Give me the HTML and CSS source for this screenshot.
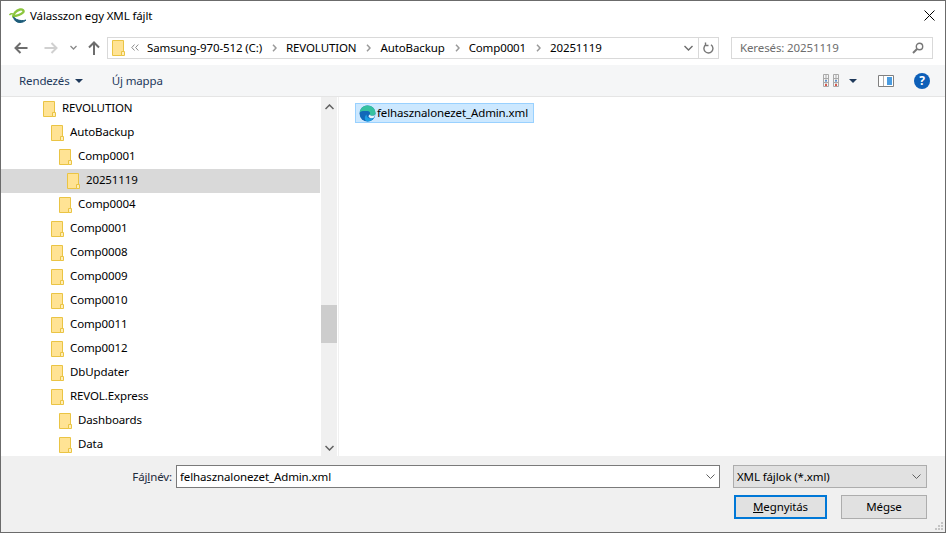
FILE: index.html
```html
<!DOCTYPE html>
<html lang="hu">
<head>
    <meta charset="UTF-8">
    <title>Válasszon egy XML fájlt</title>
    <link rel="stylesheet" href="styles.css">
</head>
<body>
<svg class="defs" width="0" height="0">
    <symbol id="folder" viewBox="0 0 13 16">
        <path d="M.5.500h11v15H.5z" fill="#ffe394" stroke="#eac444"/>
        <path d="M9.500 15.500v-4h3v4z" fill="#ffeeb8" stroke="#eac444"/>
    </symbol>
    <symbol id="crumb-sep" viewBox="0 0 5 8">
        <path d="M1 .8L4 4 1 7.200" fill="none" stroke="#9a9a9a" stroke-width="1.500"/>
    </symbol>
</svg>
<div class="dialog">
    <div class="titlebar">
        <svg class="app-logo" width="18" height="16" viewBox="0 0 18 16">
            <path d="M3 8.500C7 8 11.500 7 14 4.500 15.500 2.500 13.500 1 11 1.500 7 2.300 4 6 4.500 9" fill="none" stroke="#8cc63f" stroke-width="2.400"/>
            <path d="M.5 7C1.500 5.500 2.500 5.500 4 6" fill="none" stroke="#8cc63f" stroke-width="1.400"/>
            <path d="M4.500 9C5 12.500 7.500 14.500 11 14.500 13.500 14.500 15.500 13.500 17 12 14 13 8 13 4.500 9z" fill="#1d5c7a" stroke="#1d5c7a"/>
        </svg>
        <span class="title">Válasszon egy XML fájlt</span>
        <svg class="close" width="11" height="11" viewBox="0 0 11 11"><path d="M.5.500l10 10M10.500.500l-10 10" stroke="#000" stroke-width="1"/></svg>
    </div>

    <div class="navbar">
        <svg class="nav-icon" width="14" height="12" viewBox="0 0 14 12"><path d="M1 6h12.500M6.500 1L1.500 6l5 5" fill="none" stroke="#6d6d6d" stroke-width="2"/></svg>
        <svg class="nav-icon nav-fwd" width="14" height="12" viewBox="0 0 14 12"><path d="M13 6H.5M7.500 1l5 5-5 5" fill="none" stroke="#d0d0d0" stroke-width="2"/></svg>
        <svg class="nav-icon nav-down" width="7" height="5" viewBox="0 0 7 5"><path d="M.5 1l3 3 3-3" fill="none" stroke="#8a8a8a" stroke-width="1.300"/></svg>
        <svg class="nav-icon nav-up" width="12" height="14" viewBox="0 0 12 14"><path d="M6 14V1.500M1 6.500l5-5 5 5" fill="none" stroke="#6d6d6d" stroke-width="2"/></svg>
        <div class="address">
            <svg class="addr-folder" width="13" height="16"><use href="#folder"/></svg>
            <svg class="addr-more" width="8" height="7" viewBox="0 0 8 7"><path d="M3.500.500L.8 3.500l2.700 3M7.300.500L4.600 3.500l2.700 3" fill="none" stroke="#8a8a8a"/></svg>
            <span class="crumb crumb-first">Samsung-970-512 (C:)</span>
            <svg class="sep" width="5" height="8"><use href="#crumb-sep"/></svg><span class="crumb">REVOLUTION</span>
            <svg class="sep" width="5" height="8"><use href="#crumb-sep"/></svg><span class="crumb">AutoBackup</span>
            <svg class="sep" width="5" height="8"><use href="#crumb-sep"/></svg><span class="crumb">Comp0001</span>
            <svg class="sep" width="5" height="8"><use href="#crumb-sep"/></svg><span class="crumb">20251119</span>
            <svg class="addr-drop" width="9" height="6" viewBox="0 0 9 6"><path d="M.5 1l4 4 4-4" fill="none" stroke="#6d6d6d" stroke-width="1.400"/></svg>
            <div class="refresh">
                <svg width="11" height="12" viewBox="0 0 11 12"><path d="M3 2.700a4.500 4.500 0 1 0 5 .1M2.500 .5v3h3" fill="none" stroke="#777" stroke-width="1.400"/></svg>
            </div>
        </div>
        <div class="search">
            <span>Keresés: 20251119</span>
            <svg width="12" height="12" viewBox="0 0 12 12"><circle cx="7.500" cy="4.500" r="3.200" fill="none" stroke="#777" stroke-width="1.400"/><path d="M5 7L1 11" stroke="#777" stroke-width="2"/></svg>
        </div>
    </div>

    <div class="toolbar">
        <span class="tool tool-sort">Rendezés</span>
        <span class="caret"></span>
        <span class="tool tool-new">Új mappa</span>
        <svg class="view-icon" width="16" height="13" viewBox="0 0 16 13">
            <path d="M.5.500h5v12h-5zM10.500.500h5v12h-5zM.5 4.500h5M.5 8.500h5M10.500 4.500h5M10.500 8.500h5M3 .5v12M13 .5v12" fill="none" stroke="#a9a9a9"/>
            <path d="M2 10h2v2H2zM12 10h2v2h-2z" fill="#d65a4e"/>
            <path d="M2 6h2v1.500H2zM12 6h2v1.500h-2z" fill="#5a93d6"/>
        </svg>
        <span class="caret caret-view"></span>
        <svg class="pane-icon" width="16" height="12" viewBox="0 0 16 12">
            <path d="M.5.500h15v11H.5z" fill="#fff" stroke="#808080"/>
            <path d="M9 2h5v8H9z" fill="#4a9ce0"/>
            <path d="M5.500 1v10" stroke="#b0b0b0"/>
        </svg>
        <span class="help">?</span>
    </div>

    <div class="main">
        <div class="tree">
            <div class="row lvl0"><svg width="13" height="16"><use href="#folder"/></svg><span>REVOLUTION</span></div>
            <div class="row lvl1"><svg width="13" height="16"><use href="#folder"/></svg><span>AutoBackup</span></div>
            <div class="row lvl2"><svg width="13" height="16"><use href="#folder"/></svg><span>Comp0001</span></div>
            <div class="row lvl3 selected"><svg width="13" height="16"><use href="#folder"/></svg><span>20251119</span></div>
            <div class="row lvl2"><svg width="13" height="16"><use href="#folder"/></svg><span>Comp0004</span></div>
            <div class="row lvl1"><svg width="13" height="16"><use href="#folder"/></svg><span>Comp0001</span></div>
            <div class="row lvl1"><svg width="13" height="16"><use href="#folder"/></svg><span>Comp0008</span></div>
            <div class="row lvl1"><svg width="13" height="16"><use href="#folder"/></svg><span>Comp0009</span></div>
            <div class="row lvl1"><svg width="13" height="16"><use href="#folder"/></svg><span>Comp0010</span></div>
            <div class="row lvl1"><svg width="13" height="16"><use href="#folder"/></svg><span>Comp0011</span></div>
            <div class="row lvl1"><svg width="13" height="16"><use href="#folder"/></svg><span>Comp0012</span></div>
            <div class="row lvl1"><svg width="13" height="16"><use href="#folder"/></svg><span>DbUpdater</span></div>
            <div class="row lvl1"><svg width="13" height="16"><use href="#folder"/></svg><span>REVOL.Express</span></div>
            <div class="row lvl2"><svg width="13" height="16"><use href="#folder"/></svg><span>Dashboards</span></div>
            <div class="row lvl2"><svg width="13" height="16"><use href="#folder"/></svg><span>Data</span></div>
        </div>
        <div class="scrollbar">
            <svg class="arrow" width="9" height="6" viewBox="0 0 9 6"><path d="M.5 5l4-4 4 4" fill="none" stroke="#606060" stroke-width="1.500"/></svg>
            <div class="thumb"></div>
            <svg class="arrow arrow-down" width="9" height="6" viewBox="0 0 9 6"><path d="M.5 1l4 4 4-4" fill="none" stroke="#606060" stroke-width="1.500"/></svg>
        </div>
        <div class="files">
            <div class="file">
                <svg width="17" height="17" viewBox="0 0 17 17">
                    <circle cx="8.500" cy="8.500" r="8" fill="#1268b8"/>
                    <path d="M.6 7.500C1.500 3 4.500.5 8.500.5c4.500 0 8 3.300 8 7.500 0 1.500-1.300 2.800-3.300 2.800-1.500 0-2.500-.6-2.500-1.300 1-1.200.3-3.500-2.500-3.500C5 6 2.500 5.500.6 7.500z" fill="#35c1a0"/>
                    <path d="M7.500 9.500c0 3 2.500 4.500 5 4 1.200-.2 2-.6 2.500-1-1.300 2.500-3.700 4-6.500 4C6 16.500 4.500 12 7.500 9.500z" fill="#1b9de2"/>
                    <path d="M10.700 9.500c.3.800 1.300 1.300 2.500 1.300 1.400 0 2.500-.6 3-1.600-.3 1.500-.7 2.500-1.200 3.300-1.500 1.200-4.600 1.200-5.500-1 0-.7.400-1.400 1.200-2z" fill="#e6f4fb"/>
                </svg>
                <span class="file-name">felhasznalonezet_Admin.xml</span>
            </div>
        </div>
    </div>

    <div class="bottom">
        <div class="bottom-row">
            <label class="name-label" for="fileName">Fáj<u>l</u>név:</label>
            <div class="name-box">
                <input id="fileName" type="text" value="felhasznalonezet_Admin.xml">
                <svg width="9" height="5" viewBox="0 0 9 5"><path d="M.5.500l4 4 4-4" fill="none" stroke="#606060"/></svg>
            </div>
            <div class="type-box">
                <span>XML fájlok (*.xml)</span>
                <svg width="9" height="5" viewBox="0 0 9 5"><path d="M.5.500l4 4 4-4" fill="none" stroke="#606060"/></svg>
            </div>
        </div>
        <div class="button-row">
            <button class="btn btn-primary"><u>M</u>egnyitás</button>
            <button class="btn btn-cancel">Mégse</button>
        </div>
        <svg class="grip" width="10" height="10" viewBox="0 0 10 10">
            <path d="M7 1h2v2H7zM4 4h2v2H4zM7 4h2v2H7zM1 7h2v2H1zM4 7h2v2H4zM7 7h2v2H7z" fill="#c4c4c4"/>
        </svg>
    </div>
</div>
</body>
</html>
```

FILE: styles.css
```css
* { box-sizing: border-box; }
html, body { margin: 0; padding: 0; overflow: hidden; }
body { font-family: "Noto Sans", "Open Sans", sans-serif; font-size: 11.5px; letter-spacing: -0.12px; color: #000; background: #fff; }
.defs { position: absolute; }

.dialog { width: 946px; height: 533px; border: 1px solid #6b6b6b; display: flex; flex-direction: column; background: #fff; position: relative; }

.titlebar { height: 30px; flex: none; display: flex; align-items: center; padding-left: 8px; padding-right: 10px; }
.app-logo { margin-right: 3px; margin-top: -1px; }
.title { flex: 1; margin-top: -1px; }
.close { margin-top: -2px; }

.navbar { height: 34px; flex: none; display: flex; align-items: center; padding-left: 13px; padding-bottom: 1px; }
.nav-icon { flex: none; }
.nav-fwd { margin-left: 16px; }
.nav-down { margin-left: 12px; }
.nav-up { margin-left: 11px; }

.address { width: 612px; height: 22px; margin-left: 7px; border: 1px solid #d9d9d9; display: flex; align-items: center; padding-left: 4px; }
.addr-more { margin-left: 6px; }
.crumb { white-space: nowrap; }
.crumb-first { margin-left: 8px; }
.sep { flex: none; margin: 0 9px 0 10px; }
.addr-drop { margin-left: auto; margin-right: 5px; }
.refresh { width: 20px; height: 20px; border-left: 1px solid #d9d9d9; display: flex; align-items: center; justify-content: center; }

.search { width: 202px; height: 22px; margin-left: 12px; border: 1px solid #d9d9d9; display: flex; align-items: center; justify-content: space-between; padding: 0 8px 0 8px; color: #6d6d6d; }

.toolbar { height: 32px; flex: none; background: #f5f6f7; border-bottom: 1px solid #e5e5e5; display: flex; align-items: center; padding-left: 18px; color: #1e395b; }
.tool { white-space: nowrap; }
.caret { width: 0; height: 0; margin-left: 5px; border-top: 4px solid #1e395b; border-left: 4px solid transparent; border-right: 4px solid transparent; }
.tool-new { margin-left: 29px; }
.view-icon { margin-left: auto; }
.caret-view { margin-left: 10px; }
.pane-icon { margin-left: 21px; }
.help { width: 16px; height: 16px; margin-left: 20px; margin-right: 15px; border-radius: 50%; background: #0d5fb8; color: #fff; font-weight: 700; font-size: 12px; line-height: 16px; text-align: center; }

.main { height: 359px; flex: none; display: flex; overflow: hidden; }
.tree { width: 320px; flex: none; overflow: hidden; padding-right: 1px; }
.row { height: 24px; display: flex; align-items: center; gap: 6px; white-space: nowrap; }
.row svg { flex: none; }
.row span { position: relative; top: -2px; }
.lvl0 { padding-left: 42px; }
.lvl1 { padding-left: 50px; }
.lvl2 { padding-left: 58px; }
.lvl3 { padding-left: 66px; }
.selected { background: #d9d9d9; }

.scrollbar { width: 16px; flex: none; background: #f0f0f0; display: flex; flex-direction: column; align-items: center; }
.arrow { flex: none; margin-top: 7px; }
.thumb { width: 16px; height: 38px; margin-top: 195px; background: #cdcdcd; }
.arrow-down { margin-top: auto; margin-bottom: 5px; }

.files { flex: 1; margin-left: 1px; padding: 6px 0 0 16px; border-left: 1px solid #f0f0f0; }
.file { width: 179px; height: 20px; background: #cce8ff; border: 1px solid #99d1ff; display: flex; align-items: center; padding-left: 3px; gap: 1px; white-space: nowrap; }
.file svg { flex: none; }
.file-name { position: relative; top: -1px; }

.bottom { flex: 1; background: #f0f0f0; position: relative; display: flex; flex-direction: column; padding-top: 9px; }
.bottom-row { display: flex; align-items: center; height: 23px; }
.name-label { width: 171px; text-align: right; color: #1e2a3a; }
.name-box { width: 544px; height: 23px; margin-left: 4px; background: #fff; border: 1px solid #7a7a7a; display: flex; align-items: center; padding-right: 4px; }
.name-box input { flex: 1; min-width: 0; border: none; outline: none; padding: 0 0 0 3px; font: inherit; letter-spacing: inherit; color: #000; background: transparent; }
.type-box { width: 194px; height: 23px; margin-left: 13px; background: #e1e1e1; border: 1px solid #adadad; display: flex; align-items: center; justify-content: space-between; padding: 0 5px 0 3px; }
.button-row { display: flex; height: 24px; margin-top: 7px; padding-left: 733px; }
.btn { height: 24px; padding: 0 0 1px; font: inherit; letter-spacing: inherit; color: #000; background: #e1e1e1; border: 1px solid #adadad; }
.btn-primary { width: 93px; border: 2px solid #0078d7; }
.btn-cancel { width: 86px; margin-left: 14px; }
.grip { position: absolute; right: 1px; bottom: 1px; }
```
